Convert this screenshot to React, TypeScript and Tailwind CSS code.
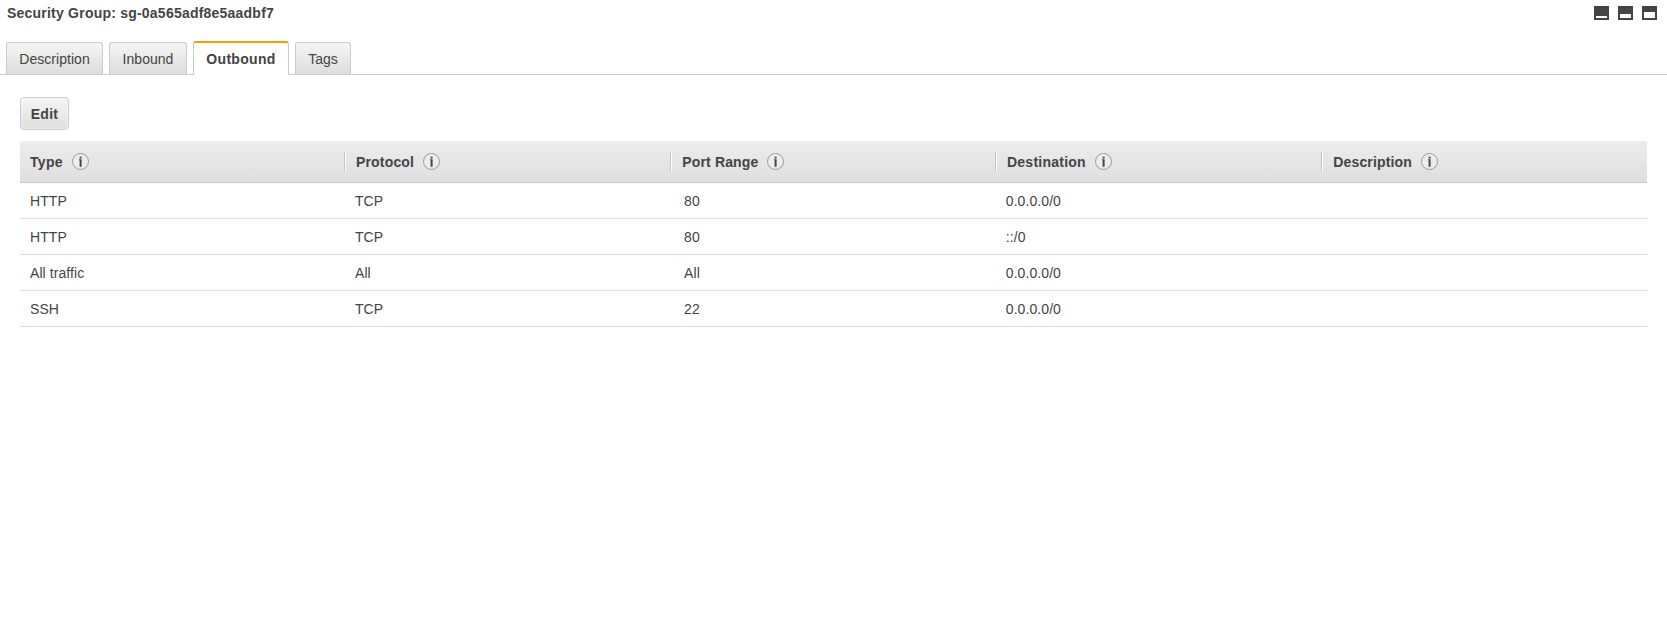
import React from "react";

const columns = [
  { name: "Type", style: "pl-2.5 tracking-[0.3px]" },
  { name: "Protocol", style: "pl-[10.6px] tracking-[0.17px]" },
  { name: "Port Range", style: "pl-[11.5px] tracking-[0.14px]" },
  { name: "Destination", style: "pl-[10.8px] tracking-[0.24px]" },
  { name: "Description", style: "pl-[11.7px] tracking-[0.15px]" },
];

const rows = [
  ["HTTP", "TCP", "80", "0.0.0.0/0", ""],
  ["HTTP", "TCP", "80", "::/0", ""],
  ["All traffic", "All", "All", "0.0.0.0/0", ""],
  ["SSH", "TCP", "22", "0.0.0.0/0", ""],
];

const tabs = [
  { name: "Description", width: "w-[97px]" },
  { name: "Inbound", width: "w-[78px]" },
  { name: "Outbound", width: "w-24" },
  { name: "Tags", width: "w-14" },
];

function PaneIcon({ top }: { top: number }) {
  return (
    <svg width="15" height="14" viewBox="0 0 15 14" shapeRendering="crispEdges">
      <rect width="15" height="14" fill="#444" />
      <rect x="2" y={top} width="11" height={12 - top} fill="#fff" />
    </svg>
  );
}

function InfoIcon() {
  return (
    <svg width="17" height="17" viewBox="0 0 17 17">
      <circle cx="8.5" cy="8.5" r="8" fill="#ececec" stroke="#999" />
      <path d="M7.6 3.8h2v1.6h-2zM7 6.3h2.6v7.4h-2V7.2H7z" fill="#444" />
    </svg>
  );
}

export default function App() {
  return (
    <div className="h-[635px] w-full overflow-hidden bg-white font-['Liberation_Sans',Arial,sans-serif] text-sm text-[#444]">
      <header className="flex h-[41px] items-start justify-between pr-2.5 pl-[7px]">
        <h1 className="pt-[3px] font-bold tracking-[0.22px]">Security Group: sg-0a565adf8e5aadbf7</h1>
        <div className="flex gap-[9px] pt-1.5">
          <PaneIcon top={10} />
          <PaneIcon top={8} />
          <PaneIcon top={6} />
        </div>
      </header>

      <nav className="flex h-[34px] items-end gap-1.5 border-b border-[#ccc] pl-1.5">
        {tabs.map(({ name, width }) =>
          name === "Outbound" ? (
            <button
              key={name}
              className={`${width} -mb-px flex h-[34px] items-center justify-center rounded-t-[3px] border-x border-t-2 border-x-[#ccc] border-t-[#f90] bg-white font-bold tracking-[0.3px]`}
            >
              {name}
            </button>
          ) : (
            <button
              key={name}
              className={`${width} flex h-8 items-center justify-center rounded-t-[3px] border border-b-0 border-[#ccc] bg-linear-to-b from-[#f5f5f5] to-[#ddd] tracking-[0.04px]`}
            >
              {name}
            </button>
          ),
        )}
      </nav>

      <main className="px-5 pt-[22px]">
        <button className="flex h-[33px] w-[49px] items-center justify-center rounded-[4px] border border-[#ccc] bg-linear-to-b from-[#f5f5f5] to-[#dedede] font-bold tracking-[0.3px] shadow-[inset_0_0_3px_#fff]">
          Edit
        </button>

        <div className="mt-[11px]">
          <div className="grid h-[42px] grid-cols-5 border-b border-[#c8c8c8] bg-linear-to-b from-[#ededed] to-[#dedede]">
            {columns.map(({ name, style }, index) => (
              <div key={name} className="flex h-full items-start">
                <div className={`${style} flex flex-1 items-start gap-[9px] pt-3 font-bold`}>
                  <span className="pt-px leading-[17px]">{name}</span>
                  <InfoIcon />
                </div>
                {index < 4 && (
                  <div className="mt-[11px] -mr-px h-[19px] w-0.5 border-r border-l border-r-white border-l-[#c4c4c4]" />
                )}
              </div>
            ))}
          </div>
          {rows.map((row, r) => (
            <div key={r} className="grid h-9 grid-cols-5 items-center border-b border-[#ddd] tracking-[0.08px]">
              {row.map((value, c) => (
                <div key={c} className={c === 2 ? "pl-[13.3px]" : c === 1 || c === 3 ? "pl-[9.6px]" : "pl-2.5"}>
                  {value}
                </div>
              ))}
            </div>
          ))}
        </div>
      </main>
    </div>
  );
}
